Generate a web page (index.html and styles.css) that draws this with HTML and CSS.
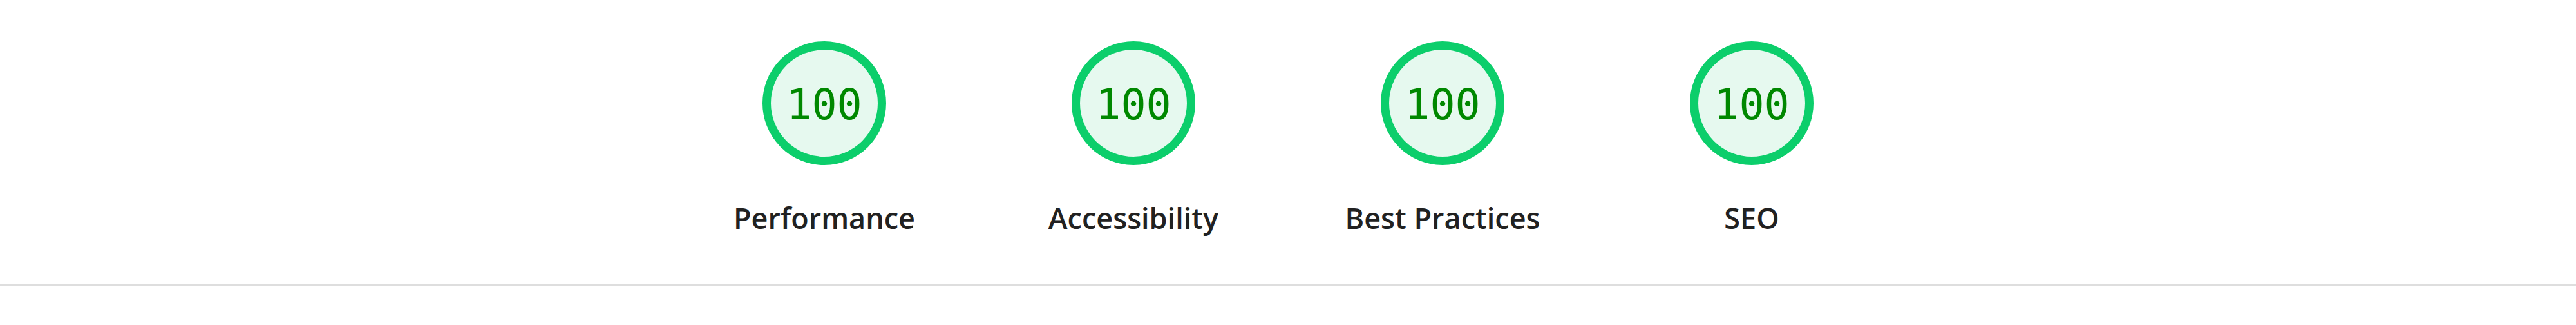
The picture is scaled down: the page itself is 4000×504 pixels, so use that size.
FILE: index.html
```html
<!DOCTYPE html>
<html lang="en">
<head>
    <meta charset="UTF-8">
    <meta name="viewport" content="width=device-width, initial-scale=1.0">
    <title>Lighthouse Scores</title>
    <link rel="stylesheet" href="styles.css">
</head>
<body>

    <div class="scores">
        <div class="score">
            <div class="gauge">100</div>
            <div class="score-label">Performance</div>
        </div>
        <div class="score">
            <div class="gauge">100</div>
            <div class="score-label">Accessibility</div>
        </div>
        <div class="score">
            <div class="gauge">100</div>
            <div class="score-label">Best Practices</div>
        </div>
        <div class="score">
            <div class="gauge">100</div>
            <div class="score-label">SEO</div>
        </div>
    </div>

    <hr class="divider">

</body>
</html>
```

FILE: styles.css
```css
body {
    margin: 0;
    background: #fff;
    font-family: "Open Sans", "Noto Sans", sans-serif;
}
.scores {
    display: flex;
    justify-content: center;
    padding-top: 64px;
    padding-bottom: 80px;
}
.score {
    width: 480px;
    display: flex;
    flex-direction: column;
    align-items: center;
}
.gauge {
    width: 192px;
    height: 192px;
    box-sizing: border-box;
    padding-top: 4px;
    border: 13px solid #0cce6b;
    border-radius: 50%;
    background-color: #e6f9ef;
    color: #008800;
    font-family: "DejaVu Sans Mono", monospace;
    font-size: 65px;
    display: flex;
    align-items: center;
    justify-content: center;
}
.score-label {
    margin-top: 59px;
    font-size: 45px;
    line-height: 1;
    font-weight: 600;
    color: #212121;
}
.divider {
    margin: 0;
    border: none;
    height: 4px;
    background-color: #dedede;
}
```
